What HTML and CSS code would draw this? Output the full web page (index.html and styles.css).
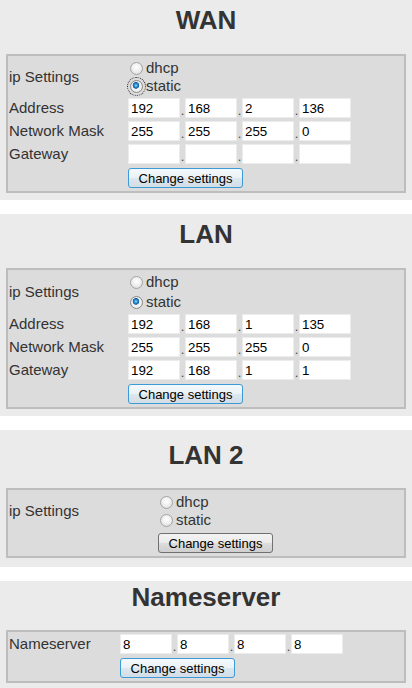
FILE: index.html
```html
<!DOCTYPE html>
<html>
<head>
  <meta charset="UTF-8">
  <title>Network Settings</title>
  <link rel="stylesheet" href="styles.css">
</head>
<body>
  <section class="panel">
    <h1>WAN</h1>
    <div class="form">
      <div class="label">ip Settings</div>
      <div class="radios">
        <label class="radio"><input type="radio" name="wan-mode">dhcp</label>
        <label class="radio"><input type="radio" name="wan-mode" class="focused" checked>static</label>
      </div>
      <div class="label">Address</div>
      <div class="ip">
        <input type="text" value="192"><span class="dot">.</span><input type="text" value="168"><span class="dot">.</span><input type="text" value="2"><span class="dot">.</span><input type="text" value="136">
      </div>
      <div class="label">Network Mask</div>
      <div class="ip">
        <input type="text" value="255"><span class="dot">.</span><input type="text" value="255"><span class="dot">.</span><input type="text" value="255"><span class="dot">.</span><input type="text" value="0">
      </div>
      <div class="label">Gateway</div>
      <div class="ip">
        <input type="text" value=""><span class="dot">.</span><input type="text" value=""><span class="dot">.</span><input type="text" value=""><span class="dot">.</span><input type="text" value="">
      </div>
      <div></div>
      <div class="actions"><button class="btn btn-hover">Change settings</button></div>
    </div>
  </section>

  <section class="panel panel-lan">
    <h1>LAN</h1>
    <div class="form">
      <div class="label">ip Settings</div>
      <div class="radios">
        <label class="radio"><input type="radio" name="lan-mode">dhcp</label>
        <label class="radio"><input type="radio" name="lan-mode" checked>static</label>
      </div>
      <div class="label">Address</div>
      <div class="ip">
        <input type="text" value="192"><span class="dot">.</span><input type="text" value="168"><span class="dot">.</span><input type="text" value="1"><span class="dot">.</span><input type="text" value="135">
      </div>
      <div class="label">Network Mask</div>
      <div class="ip">
        <input type="text" value="255"><span class="dot">.</span><input type="text" value="255"><span class="dot">.</span><input type="text" value="255"><span class="dot">.</span><input type="text" value="0">
      </div>
      <div class="label">Gateway</div>
      <div class="ip">
        <input type="text" value="192"><span class="dot">.</span><input type="text" value="168"><span class="dot">.</span><input type="text" value="1"><span class="dot">.</span><input type="text" value="1">
      </div>
      <div></div>
      <div class="actions"><button class="btn btn-hover">Change settings</button></div>
    </div>
  </section>

  <section class="panel panel-lan2">
    <h1>LAN 2</h1>
    <div class="form form-wide">
      <div class="label">ip Settings</div>
      <div class="radios">
        <label class="radio"><input type="radio" name="lan2-mode">dhcp</label>
        <label class="radio"><input type="radio" name="lan2-mode">static</label>
      </div>
      <div></div>
      <div class="actions"><button class="btn">Change settings</button></div>
    </div>
  </section>

  <section class="panel panel-ns">
    <h1>Nameserver</h1>
    <div class="form form-narrow">
      <div class="label">Nameserver</div>
      <div class="ip">
        <input type="text" value="8"><span class="dot">.</span><input type="text" value="8"><span class="dot">.</span><input type="text" value="8"><span class="dot">.</span><input type="text" value="8">
      </div>
      <div></div>
      <div class="actions"><button class="btn btn-hover">Change settings</button></div>
    </div>
  </section>
</body>
</html>
```

FILE: styles.css
```css
body {
  margin: 0;
  background: #fff;
  color: #333;
  font-family: "Liberation Sans", Arial, sans-serif;
  font-size: 15px;
}

.panel {
  background: #ebebeb;
  padding: 4px 6px 7px 6px;
  margin-bottom: 14px;
}

.panel-lan .radio:last-child {
  margin-top: 2px;
}

.panel-lan2 {
  padding-top: 9px;
  padding-bottom: 9px;
}

.panel-lan2 h1 {
  margin-bottom: 17px;
}

.panel-ns {
  padding-top: 0;
}

.panel-ns h1 {
  margin-bottom: 17px;
}

h1 {
  margin: 0 0 18px 0;
  font-size: 26px;
  line-height: 32px;
  font-weight: bold;
  text-align: center;
  color: #333;
}

.form {
  display: grid;
  grid-template-columns: 119px 1fr;
  align-items: center;
  row-gap: 3px;
  background: #dcdcdc;
  border: 2px solid #bdbdbd;
  padding: 3px 0 3px 1px;
}

.form-wide {
  grid-template-columns: 149px 1fr;
}

.form-narrow {
  grid-template-columns: 111px 1fr;
  padding-top: 2px;
}

.label {
  line-height: 18px;
  color: #333;
}

.radios {
  display: flex;
  flex-direction: column;
}

.radio {
  display: flex;
  align-items: center;
  height: 18px;
  line-height: 18px;
  color: #333;
}

.radio input {
  appearance: none;
  -webkit-appearance: none;
  width: 13px;
  height: 13px;
  margin: 0 3px 0 2px;
  border: 1px solid #a4a4a4;
  border-radius: 50%;
  background: radial-gradient(circle at 50% 40%, #ffffff 0, #f2f2f2 40%, #d6d6d6 100%);
  box-sizing: border-box;
}

.radio input:checked {
  border-color: #8a8a8a;
  background:
    radial-gradient(circle at 45% 40%, #9fdcff 0, #2b8fd6 1.6px, #145e9e 3px, transparent 3.6px),
    radial-gradient(circle, #fff 0, #eeeeee 60%, #cfcfcf 100%);
}

.radio input.focused {
  outline: 1px dotted #222;
  outline-offset: 2px;
}

.ip {
  display: flex;
  align-items: flex-end;
  height: 20px;
}

.ip input {
  width: 52px;
  height: 20px;
  box-sizing: border-box;
  margin: 0;
  padding: 0 2px;
  border: 1px solid #ececec;
  background: #fff;
  font-family: "Liberation Sans", Arial, sans-serif;
  font-size: 13.33px;
  color: #000;
  outline: none;
}

.dot {
  width: 5px;
  font-size: 13px;
  line-height: 14px;
  text-align: center;
  color: #444;
}

.actions {
  display: flex;
  padding-top: 1px;
}

.btn {
  width: 115px;
  height: 20px;
  padding: 0;
  border: 1px solid #707070;
  border-radius: 3px;
  background: linear-gradient(#f3f3f3 0, #ebebeb 50%, #dddddd 51%, #cfcfcf 100%);
  font-family: "Liberation Sans", Arial, sans-serif;
  font-size: 13px;
  color: #000;
  cursor: pointer;
}

.btn-hover {
  border-color: #3c9bd6;
  background: linear-gradient(#f4f9fc 0, #eaf2f7 50%, #dde7ee 51%, #d2dde6 100%);
}
```
